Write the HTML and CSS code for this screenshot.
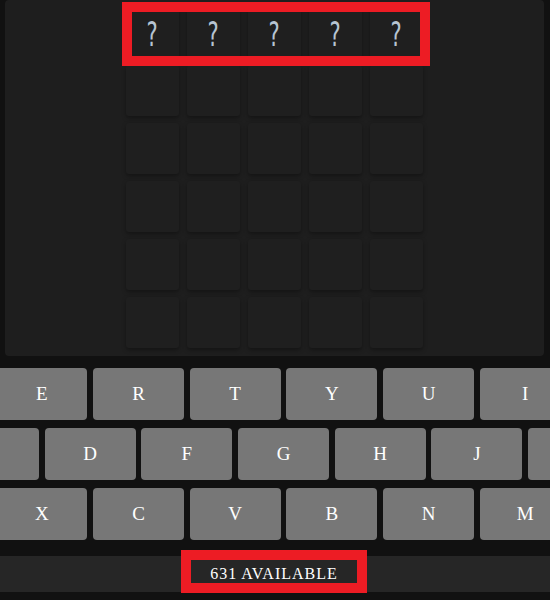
FILE: index.html
```html
<!DOCTYPE html>
<html lang="en">
<head>
<meta charset="utf-8">
<title>Word game</title>
<link rel="stylesheet" href="styles.css">
</head>
<body>
<div class="app">
  <div class="board">
    <div class="grid">
      <div class="tile"><span class="q">?</span></div>
      <div class="tile"><span class="q">?</span></div>
      <div class="tile"><span class="q">?</span></div>
      <div class="tile"><span class="q">?</span></div>
      <div class="tile"><span class="q">?</span></div>
      <div class="tile"></div><div class="tile"></div><div class="tile"></div><div class="tile"></div><div class="tile"></div>
      <div class="tile"></div><div class="tile"></div><div class="tile"></div><div class="tile"></div><div class="tile"></div>
      <div class="tile"></div><div class="tile"></div><div class="tile"></div><div class="tile"></div><div class="tile"></div>
      <div class="tile"></div><div class="tile"></div><div class="tile"></div><div class="tile"></div><div class="tile"></div>
      <div class="tile"></div><div class="tile"></div><div class="tile"></div><div class="tile"></div><div class="tile"></div>
    </div>
    <div class="mark-top"></div>
  </div>
  <div class="keyboard">
    <div class="krow">
      <div class="key">Q</div><div class="key">W</div><div class="key">E</div><div class="key">R</div><div class="key">T</div><div class="key">Y</div><div class="key">U</div><div class="key">I</div><div class="key">O</div><div class="key">P</div>
    </div>
    <div class="krow">
      <div class="key">A</div><div class="key">S</div><div class="key">D</div><div class="key">F</div><div class="key">G</div><div class="key">H</div><div class="key">J</div><div class="key">K</div><div class="key">L</div>
    </div>
    <div class="krow">
      <div class="key">↵</div><div class="key">Z</div><div class="key">X</div><div class="key">C</div><div class="key">V</div><div class="key">B</div><div class="key">N</div><div class="key">M</div><div class="key key-wide">⌫</div>
    </div>
  </div>
  <div class="status">
    <span class="count">631 available</span>
  </div>
</div>
</body>
</html>
```
FILE: styles.css
```css
* { box-sizing: border-box; }
html, body {
  margin: 0;
  padding: 0;
  background: #111111;
  overflow: hidden;
  width: 550px;
  height: 600px;
}
.app {
  width: 550px;
}
.board {
  position: relative;
  margin: 0 6px 0 5px;
  padding: 7px 0 8px;
  background: #1e1e1e;
  border-radius: 4px;
}
.grid {
  display: grid;
  grid-template-columns: repeat(5, 53px);
  grid-auto-rows: 51px;
  column-gap: 8px;
  row-gap: 7px;
  justify-content: center;
}
.tile {
  background: #1f1f1f;
  border-radius: 3px;
  box-shadow: 0 2px 4px rgba(0, 0, 0, 0.35);
  display: flex;
  align-items: center;
  justify-content: center;
}
.q {
  display: inline-block;
  font-family: "DejaVu Sans", sans-serif;
  font-size: 34px;
  line-height: 1;
  color: #b6c4d2;
  transform: scaleX(0.62);
  margin-top: 2px;
}
.mark-top {
  position: absolute;
  left: 117px;
  top: 2px;
  width: 308px;
  height: 64px;
  border: 10px solid #ed1c24;
}
.keyboard {
  width: 567px;
  margin-top: 12px;
  display: flex;
  flex-direction: column;
  gap: 8px;
}
.krow {
  display: flex;
  justify-content: center;
  gap: 5.7px;
}
.key {
  flex: 0 0 91px;
  height: 52px;
  background: #777777;
  border-radius: 4px;
  display: flex;
  align-items: center;
  justify-content: center;
  font-family: "Liberation Serif", "Times New Roman", serif;
  font-size: 19px;
  color: #ffffff;
}
.key-wide {
  flex-basis: 187.7px;
}
.status {
  margin-top: 16px;
  height: 36px;
  background: #262626;
  display: flex;
  justify-content: center;
  align-items: flex-start;
  padding: 4px 2px 0 0;
}
.count {
  display: inline-block;
  width: 166px;
  height: 23px;
  padding-top: 4px;
  line-height: 19px;
  text-align: center;
  font-family: "Liberation Serif", "Times New Roman", serif;
  font-size: 16px;
  letter-spacing: 1px;
  text-transform: uppercase;
  color: #ffffff;
  outline: 10px solid #ed1c24;
}
```
